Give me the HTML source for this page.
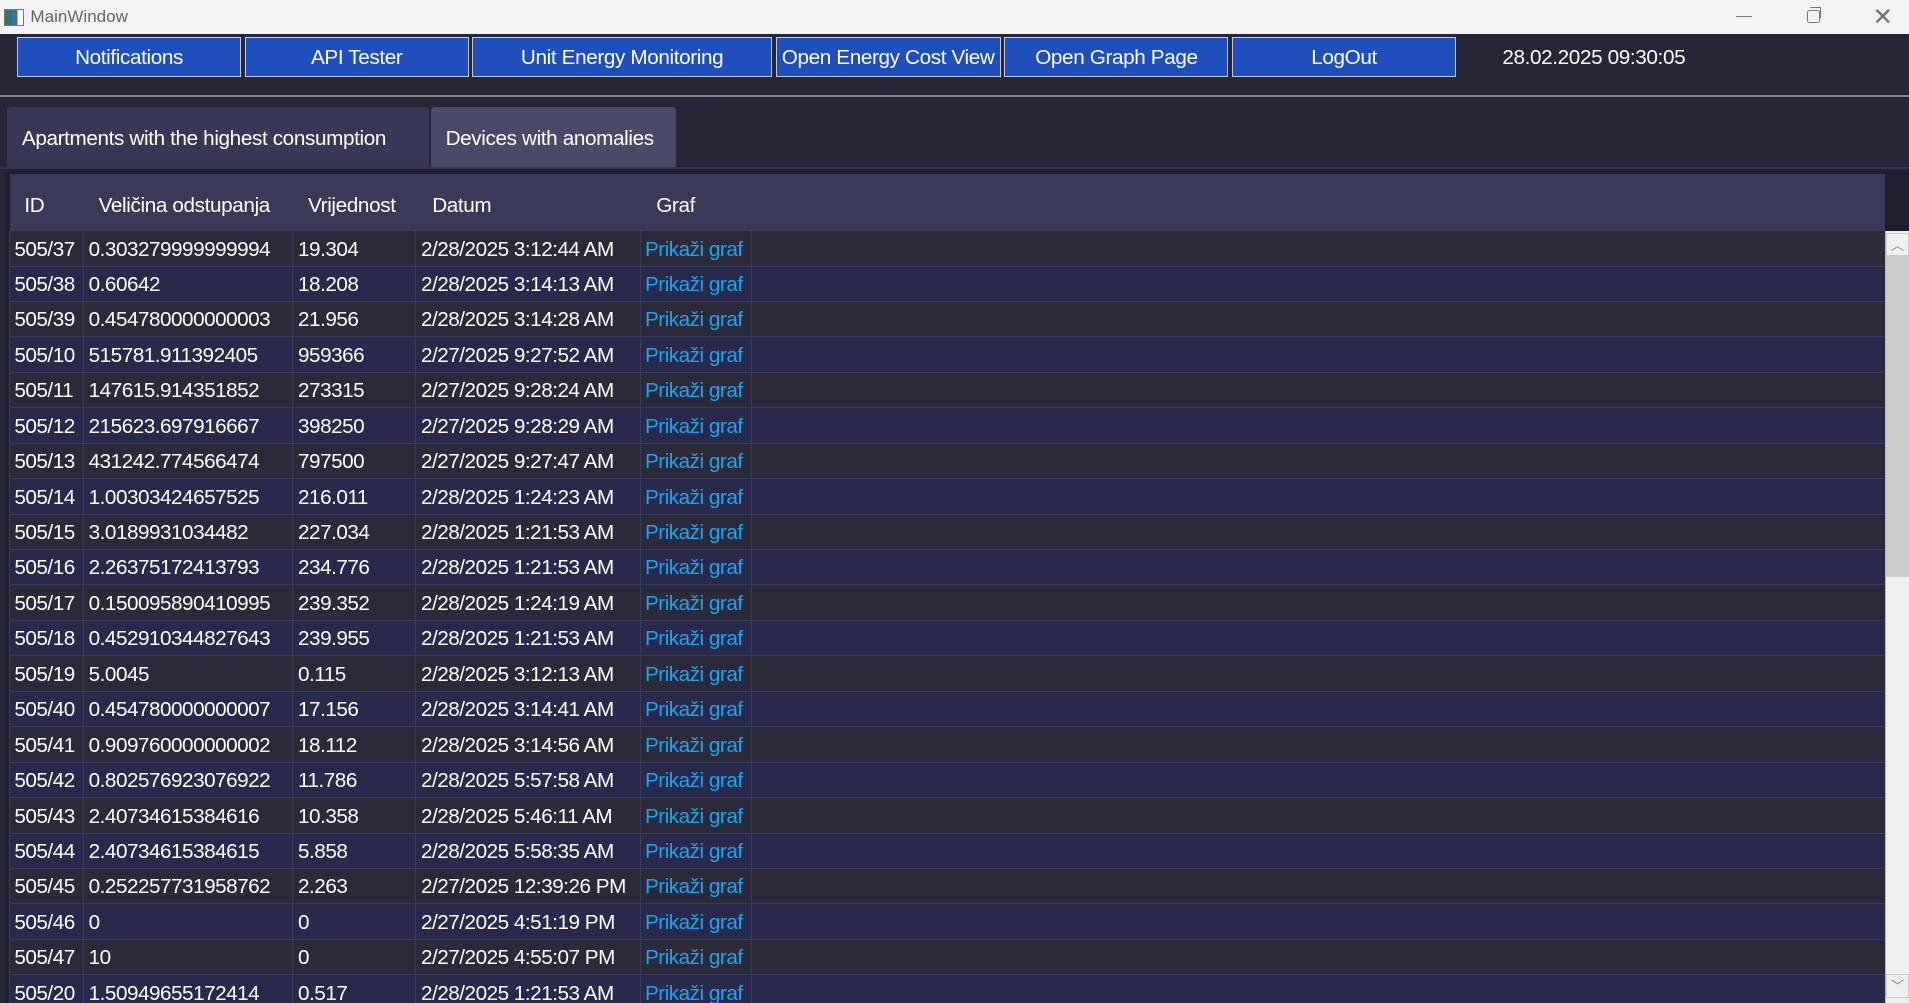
<!DOCTYPE html>
<html><head><meta charset="utf-8"><style>
html,body{margin:0;padding:0;background:#272538;overflow:hidden;width:1909px;height:1003px}
#r{position:absolute;left:0;top:0;width:1568px;height:824px;zoom:1.21747;font-family:"Liberation Sans",sans-serif;color:#fff;background:#272538;overflow:hidden}
.a{position:absolute}
.tb{left:0;top:0;width:1568px;height:28px;background:#f3f3f3;color:#666;font-size:14px}
.btn{top:30px;height:33px;background:#1e4fbd;border:1px solid #c8c8d0;box-sizing:border-box;font-size:17px;text-align:center;line-height:33px;letter-spacing:-0.3px}
.tab{top:88px;height:49px;line-height:53px;font-size:17px;border-radius:3px 3px 0 0;letter-spacing:-0.3px;box-sizing:border-box}
table{border-collapse:collapse;font-size:17px;letter-spacing:-0.4px;table-layout:fixed}
td{height:29.12px;border:1px solid #3b3b5a;padding:2px 0 0 4px;white-space:nowrap;overflow:hidden;box-sizing:border-box}
tr.o td{background:#2b2a3b}tr.e td{background:#292a4b}
td.l{color:#1ea4ee;padding-left:3px}
</style></head><body><div id="r">
<div class="a tb"><div class="a" style="left:3px;top:7px;width:15px;height:13px;border:1px solid #777;background:linear-gradient(90deg,#2f7a58 40%,#3b6fb0 40%,#3b6fb0 70%,#fff 70%)"></div><div class="a" style="left:25px;top:6px">MainWindow</div>
<div class="a" style="left:1426px;top:13px;width:13px;height:1px;background:#777"></div>
<div class="a" style="left:1484px;top:8px;width:9px;height:9px;border:1px solid #777;border-radius:2px"></div><div class="a" style="left:1487px;top:6px;width:8px;height:8px;border-top:1px solid #777;border-right:1px solid #777"></div>
<div class="a" style="left:1538px;top:2px;font-size:20px;color:#777">✕</div></div>
<div class="a btn" style="left:14px;width:184px">Notifications</div>
<div class="a btn" style="left:201px;width:184px">API Tester</div>
<div class="a btn" style="left:388px;width:246px">Unit Energy Monitoring</div>
<div class="a btn" style="left:637px;width:185px">Open Energy Cost View</div>
<div class="a btn" style="left:825px;width:184px">Open Graph Page</div>
<div class="a btn" style="left:1012px;width:184px">LogOut</div>
<div class="a" style="left:1234px;top:38px;font-size:17px;letter-spacing:-0.3px">28.02.2025 09:30:05</div>
<div class="a" style="left:0;top:78px;width:1568px;height:2px;background:#858585"></div>
<div class="a tab" style="left:6px;width:346px;background:#383856;padding-left:12px">Apartments with the highest consumption</div>
<div class="a tab" style="left:354px;width:201px;background:#4a4a68;padding-left:12px">Devices with anomalies</div>
<div class="a" style="left:0;top:137px;width:1568px;height:2px;background:#34345a"></div>
<div class="a" style="left:4px;top:139px;width:1564px;height:685px;background:#201f30"></div>
<div class="a" style="left:8px;top:143px;width:1540px;height:46px;background:#3a3a58;font-size:17px;letter-spacing:-0.3px">
<span class="a" style="left:12px;top:16px">ID</span><span class="a" style="left:73px;top:16px">Veličina odstupanja</span><span class="a" style="left:245px;top:16px">Vrijednost</span><span class="a" style="left:347px;top:16px">Datum</span><span class="a" style="left:531px;top:16px">Graf</span></div>
<div class="a" style="left:7px;top:189px;width:1541px;height:640px;overflow:hidden">
<table style="width:1542px">
<colgroup><col style="width:61px"><col style="width:172px"><col style="width:101px"><col style="width:185px"><col style="width:91px"><col></colgroup>
<tbody>
<tr class="o"><td>505/37</td><td>0.303279999999994</td><td>19.304</td><td>2/28/2025 3:12:44 AM</td><td class="l">Prikaži graf</td><td></td></tr>
<tr class="e"><td>505/38</td><td>0.60642</td><td>18.208</td><td>2/28/2025 3:14:13 AM</td><td class="l">Prikaži graf</td><td></td></tr>
<tr class="o"><td>505/39</td><td>0.454780000000003</td><td>21.956</td><td>2/28/2025 3:14:28 AM</td><td class="l">Prikaži graf</td><td></td></tr>
<tr class="e"><td>505/10</td><td>515781.911392405</td><td>959366</td><td>2/27/2025 9:27:52 AM</td><td class="l">Prikaži graf</td><td></td></tr>
<tr class="o"><td>505/11</td><td>147615.914351852</td><td>273315</td><td>2/27/2025 9:28:24 AM</td><td class="l">Prikaži graf</td><td></td></tr>
<tr class="e"><td>505/12</td><td>215623.697916667</td><td>398250</td><td>2/27/2025 9:28:29 AM</td><td class="l">Prikaži graf</td><td></td></tr>
<tr class="o"><td>505/13</td><td>431242.774566474</td><td>797500</td><td>2/27/2025 9:27:47 AM</td><td class="l">Prikaži graf</td><td></td></tr>
<tr class="e"><td>505/14</td><td>1.00303424657525</td><td>216.011</td><td>2/28/2025 1:24:23 AM</td><td class="l">Prikaži graf</td><td></td></tr>
<tr class="o"><td>505/15</td><td>3.0189931034482</td><td>227.034</td><td>2/28/2025 1:21:53 AM</td><td class="l">Prikaži graf</td><td></td></tr>
<tr class="e"><td>505/16</td><td>2.26375172413793</td><td>234.776</td><td>2/28/2025 1:21:53 AM</td><td class="l">Prikaži graf</td><td></td></tr>
<tr class="o"><td>505/17</td><td>0.150095890410995</td><td>239.352</td><td>2/28/2025 1:24:19 AM</td><td class="l">Prikaži graf</td><td></td></tr>
<tr class="e"><td>505/18</td><td>0.452910344827643</td><td>239.955</td><td>2/28/2025 1:21:53 AM</td><td class="l">Prikaži graf</td><td></td></tr>
<tr class="o"><td>505/19</td><td>5.0045</td><td>0.115</td><td>2/28/2025 3:12:13 AM</td><td class="l">Prikaži graf</td><td></td></tr>
<tr class="e"><td>505/40</td><td>0.454780000000007</td><td>17.156</td><td>2/28/2025 3:14:41 AM</td><td class="l">Prikaži graf</td><td></td></tr>
<tr class="o"><td>505/41</td><td>0.909760000000002</td><td>18.112</td><td>2/28/2025 3:14:56 AM</td><td class="l">Prikaži graf</td><td></td></tr>
<tr class="e"><td>505/42</td><td>0.802576923076922</td><td>11.786</td><td>2/28/2025 5:57:58 AM</td><td class="l">Prikaži graf</td><td></td></tr>
<tr class="o"><td>505/43</td><td>2.40734615384616</td><td>10.358</td><td>2/28/2025 5:46:11 AM</td><td class="l">Prikaži graf</td><td></td></tr>
<tr class="e"><td>505/44</td><td>2.40734615384615</td><td>5.858</td><td>2/28/2025 5:58:35 AM</td><td class="l">Prikaži graf</td><td></td></tr>
<tr class="o"><td>505/45</td><td>0.252257731958762</td><td>2.263</td><td>2/27/2025 12:39:26 PM</td><td class="l">Prikaži graf</td><td></td></tr>
<tr class="e"><td>505/46</td><td>0</td><td>0</td><td>2/27/2025 4:51:19 PM</td><td class="l">Prikaži graf</td><td></td></tr>
<tr class="o"><td>505/47</td><td>10</td><td>0</td><td>2/27/2025 4:55:07 PM</td><td class="l">Prikaži graf</td><td></td></tr>
<tr class="e"><td>505/20</td><td>1.50949655172414</td><td>0.517</td><td>2/28/2025 1:21:53 AM</td><td class="l">Prikaži graf</td><td></td></tr>
</tbody></table></div>
<div class="a" style="left:1548px;top:190px;width:20px;height:634px;background:#efefef;border-left:1px solid #bbb;box-sizing:border-box"></div>
<div class="a" style="left:1549px;top:191px;width:19px;height:19px;border:1px solid #ccc;box-sizing:border-box;color:#888;font-size:11px;text-align:center;line-height:19px">︿</div>
<div class="a" style="left:1549px;top:210px;width:19px;height:264px;background:#cdcdcd"></div>
<div class="a" style="left:1549px;top:800px;width:19px;height:20px;border:1px solid #ccc;box-sizing:border-box;color:#888;font-size:11px;text-align:center;line-height:19px">﹀</div>
</div></body></html>
